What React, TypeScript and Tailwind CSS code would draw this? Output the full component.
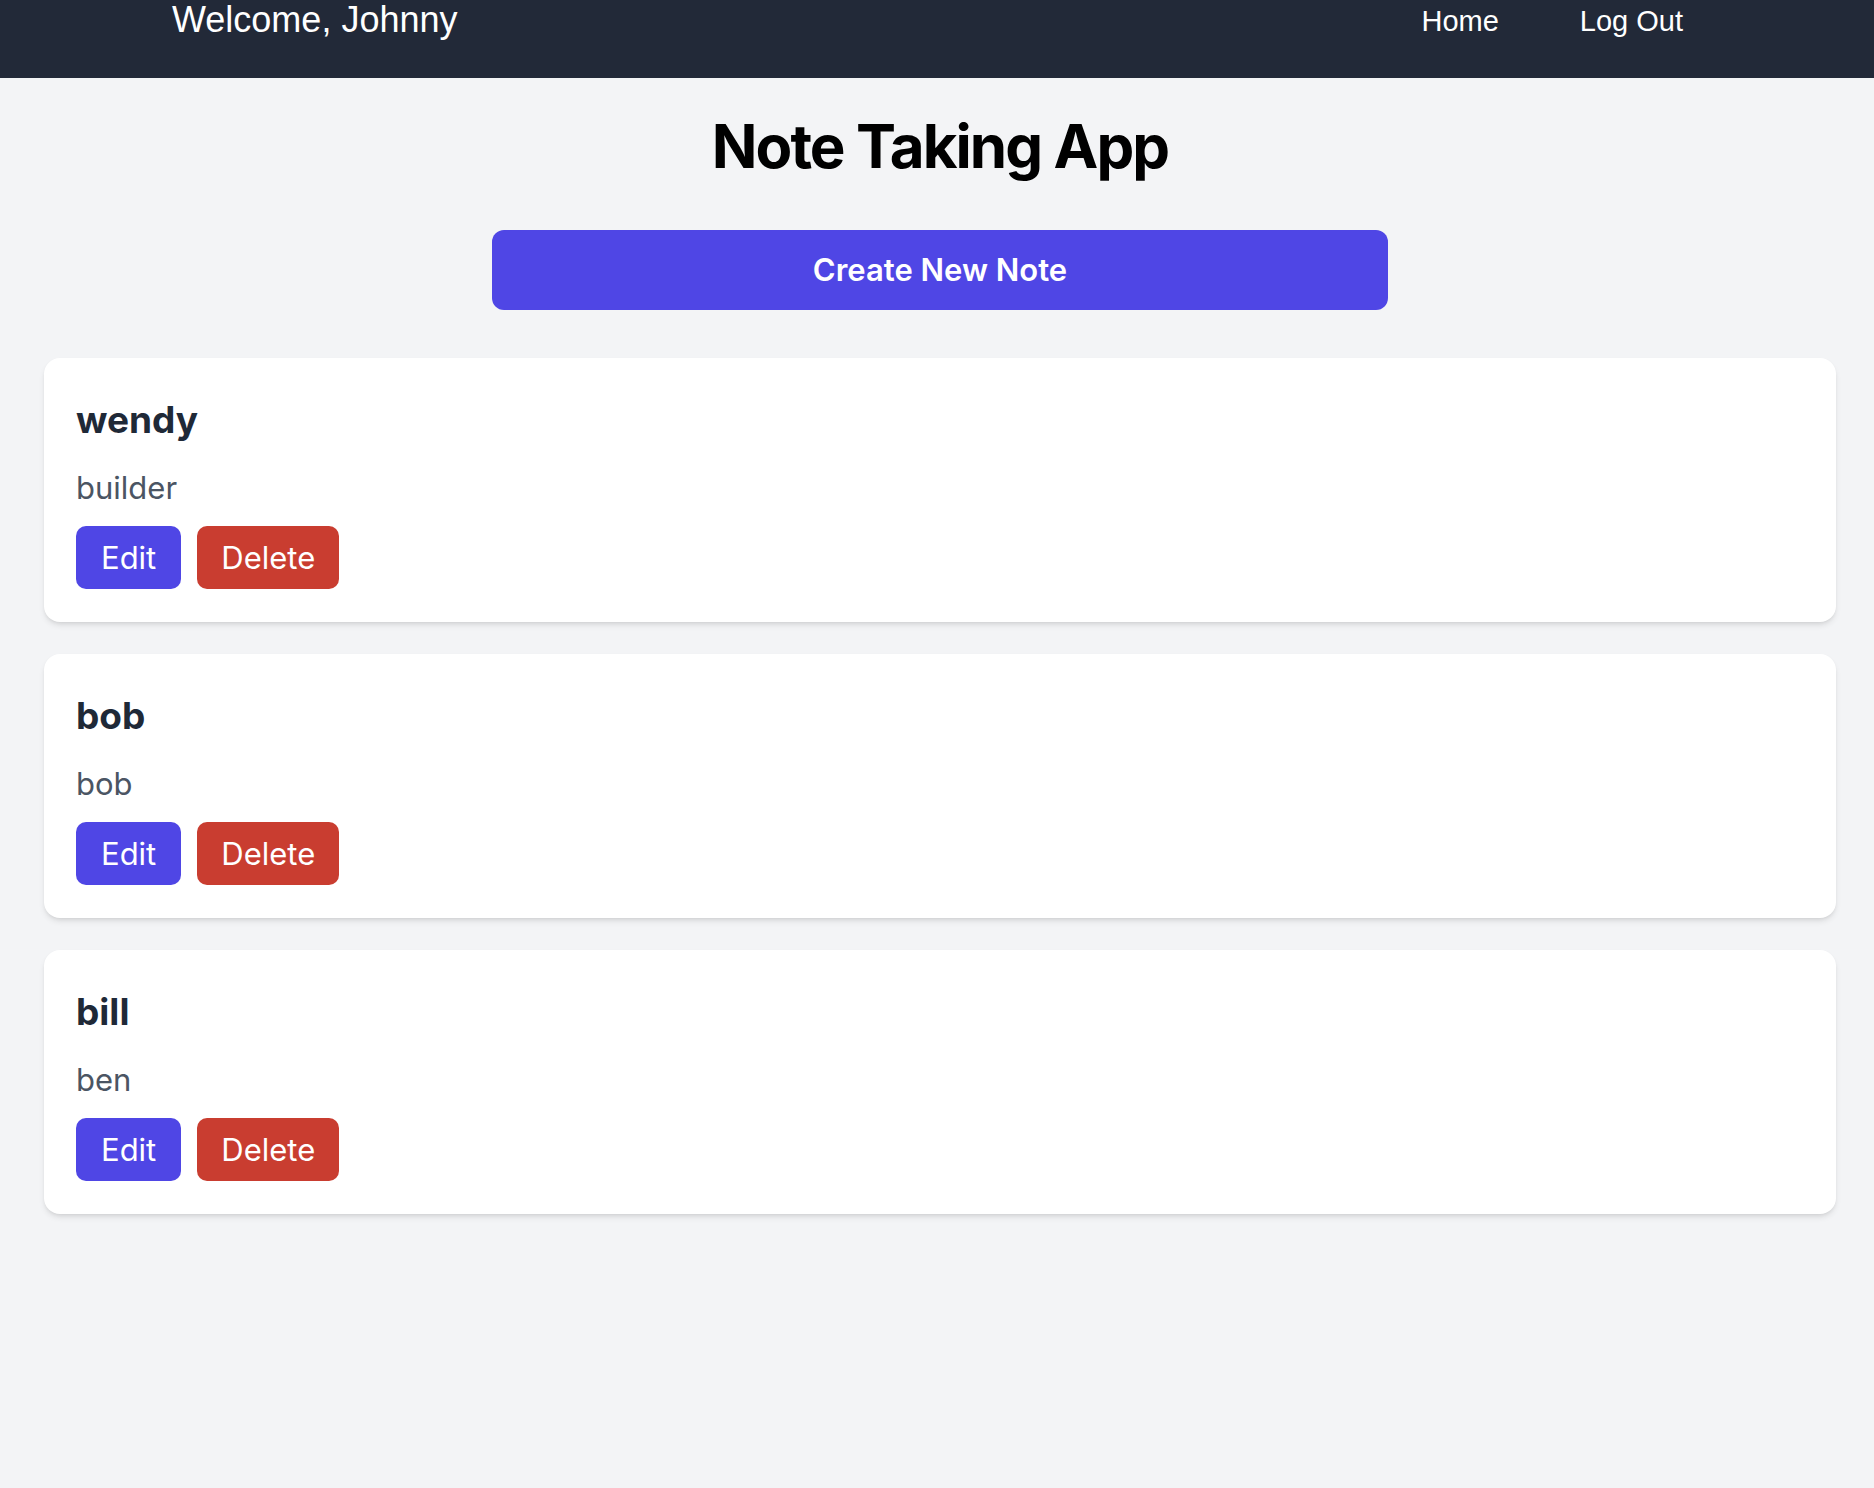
import React from "react";

const notes = [
  { title: "wendy", body: "builder" },
  { title: "bob", body: "bob" },
  { title: "bill", body: "ben" },
];

export default function App() {
  return (
    <div className="min-h-[1488px] bg-[#f3f4f6]">
      <nav className="h-[78px] bg-[#222938] pl-[172px] pr-[191px] flex items-start justify-between font-['Liberation_Sans',Arial,sans-serif] text-white">
        <div className="text-[36px] leading-[40px]">Welcome, Johnny</div>
        <div className="mt-[5px] flex gap-[81px] text-[29px] leading-[32px]">
          <a className="cursor-pointer">Home</a>
          <a className="cursor-pointer">Log Out</a>
        </div>
      </nav>
      <main className="pl-[44px] pr-[38px] font-['Inter',sans-serif]">
        <h1 className="mt-[32px] text-center text-[60px] leading-[72px] font-bold tracking-[-0.032em] text-black">
          Note Taking App
        </h1>
        <div className="mt-[48px] flex justify-center">
          <button className="w-[896px] h-[80px] rounded-[12px] bg-[#4f46e5] text-white text-[31px] font-semibold">
            Create New Note
          </button>
        </div>
        <div className="mt-[48px] flex flex-col gap-[32px]">
          {notes.map((n) => (
            <div key={n.title} className="bg-white rounded-[16px] shadow-md px-[32px] pt-[33px] pb-[33px]">
              <h2 className="text-[37px] leading-[58px] font-bold text-[#1f2937]">{n.title}</h2>
              <p className="mt-[16px] text-[31px] leading-[45px] text-[#4b5563]">{n.body}</p>
              <div className="mt-[16px] flex gap-[16px]">
                <button className="h-[63px] px-[25px] rounded-[10px] bg-[#4f46e5] text-white text-[31px] leading-[45px]">
                  Edit
                </button>
                <button className="h-[63px] px-[24px] rounded-[10px] bg-[#c93d30] text-white text-[31px] leading-[45px]">
                  Delete
                </button>
              </div>
            </div>
          ))}
        </div>
      </main>
    </div>
  );
}
